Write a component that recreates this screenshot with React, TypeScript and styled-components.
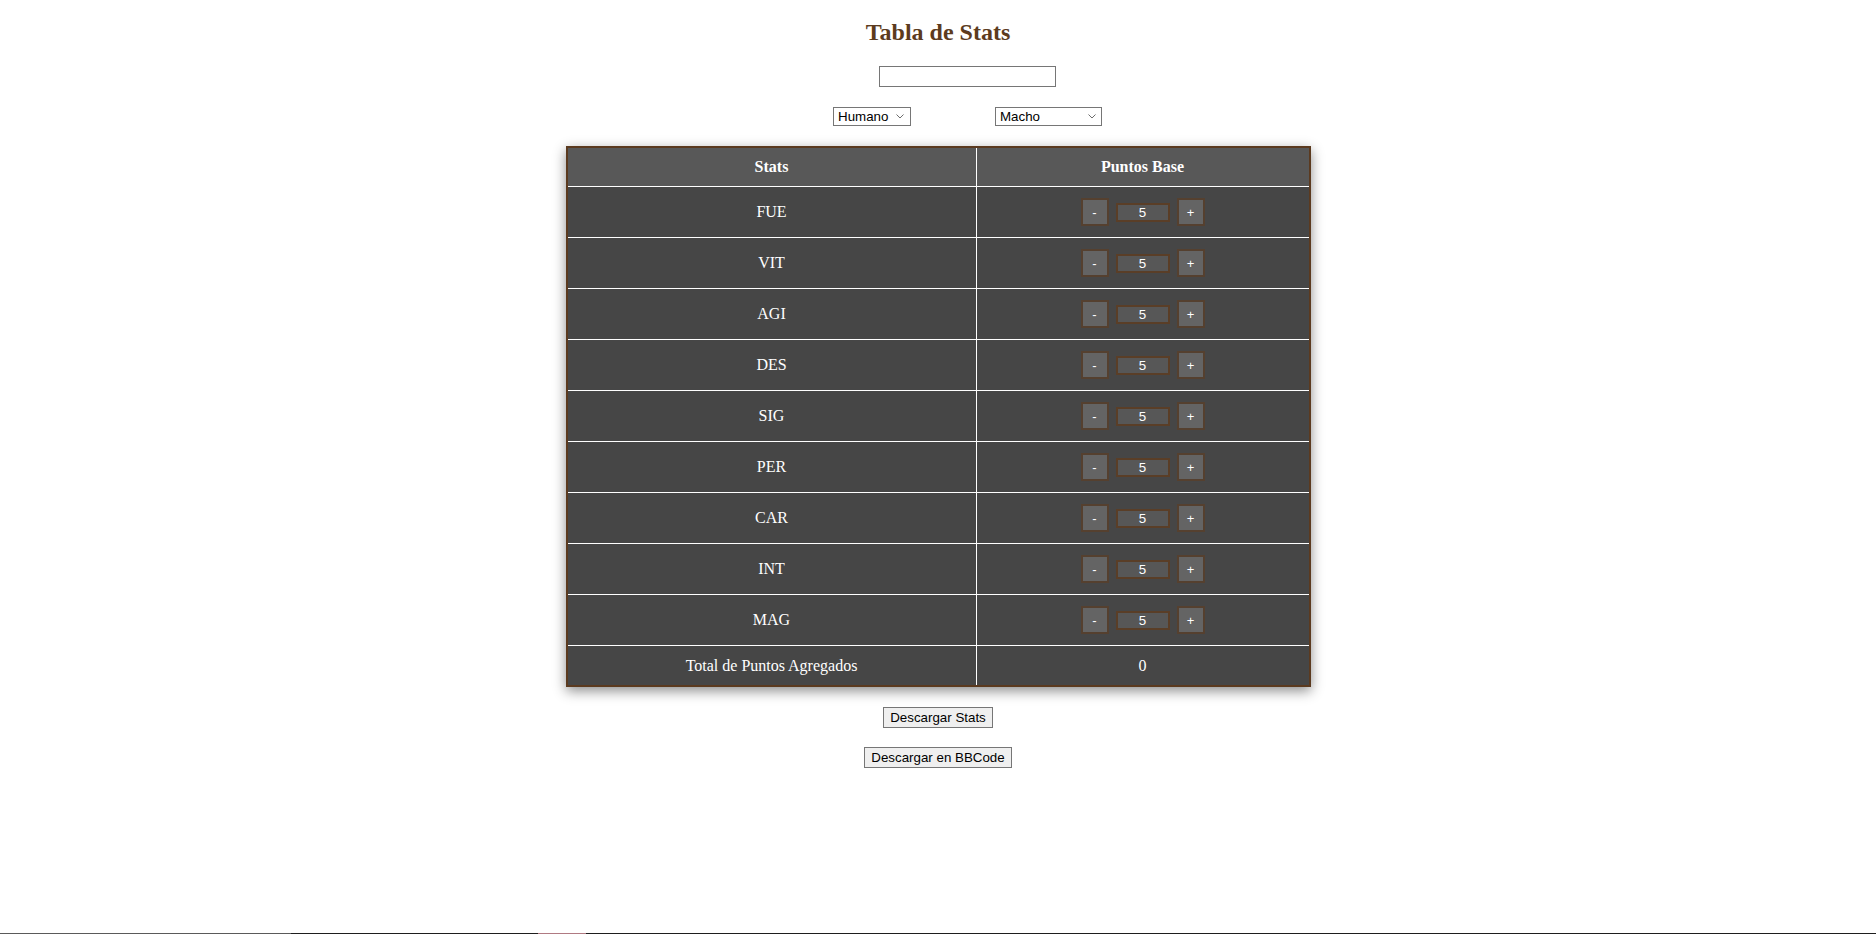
import React, { useState } from "react";
import styled, { createGlobalStyle } from "styled-components";

const GlobalStyle = createGlobalStyle`
  html, body {
    margin: 0;
    padding: 0;
    background: #ffffff;
  }
  body {
    font-family: "Liberation Serif", "Times New Roman", serif;
  }
`;

const Page = styled.main`
  display: flex;
  flex-direction: column;
  align-items: center;
  gap: 20px;
  padding-bottom: 40px;
`;

const Title = styled.h2`
  margin: 18px 0 0;
  font-family: "Liberation Serif", "Times New Roman", serif;
  font-size: 24px;
  line-height: 28px;
  font-weight: bold;
  color: #5c3b1e;
`;

const NameInput = styled.input`
  box-sizing: border-box;
  width: 177px;
  height: 21px;
  margin: 0 0 0 59px;
  padding: 1px 2px;
  border: 1px solid #767676;
  border-radius: 0;
  font-family: "Liberation Sans", Arial, sans-serif;
  font-size: 13.33px;
  outline: none;
`;

const SelectRow = styled.div`
  display: flex;
  gap: 84px;
  margin-left: 59px;
`;

const SelectWrap = styled.div`
  position: relative;
  display: flex;
`;

const Select = styled.select<{ $w: number }>`
  box-sizing: border-box;
  width: ${(p) => p.$w}px;
  height: 19px;
  margin: 0;
  padding: 0 0 0 4px;
  appearance: none;
  -webkit-appearance: none;
  border: 1px solid #767676;
  border-radius: 0;
  background: #ffffff;
  color: #000000;
  font-family: "Liberation Sans", Arial, sans-serif;
  font-size: 13.33px;
  line-height: 17px;
  outline: none;
`;

const Chevron = styled.svg<{ $right: number }>`
  position: absolute;
  top: 7px;
  right: ${(p) => p.$right}px;
  width: 8px;
  height: 5px;
  pointer-events: none;
`;

const Table = styled.table`
  box-sizing: border-box;
  width: 745px;
  table-layout: fixed;
  border-collapse: separate;
  border-spacing: 0;
  border: 2px solid #5b3a1f;
  box-shadow: 0 4px 12px rgba(0, 0, 0, 0.45);
  color: #ffffff;
  font-family: "Liberation Serif", "Times New Roman", serif;
  font-size: 16px;
`;

const HeadCell = styled.th<{ $first?: boolean }>`
  height: 39px;
  padding: 0;
  background: #585858;
  font-weight: bold;
  text-align: center;
  border-bottom: 1px solid #ffffff;
  border-right: ${(p) => (p.$first ? "1px solid #ffffff" : "none")};
  width: ${(p) => (p.$first ? "409px" : "auto")};
  box-sizing: border-box;
`;

const Cell = styled.td<{ $first?: boolean; $last?: boolean }>`
  height: ${(p) => (p.$last ? "39px" : "50px")};
  padding: 0;
  background: #464646;
  text-align: center;
  vertical-align: middle;
  border-bottom: ${(p) => (p.$last ? "none" : "1px solid #ffffff")};
  border-right: ${(p) => (p.$first ? "1px solid #ffffff" : "none")};
`;

const Controls = styled.div`
  display: flex;
  justify-content: center;
  align-items: center;
  gap: 7px;
`;

const StepButton = styled.button`
  box-sizing: border-box;
  width: 28px;
  height: 28px;
  padding: 0;
  margin: 0;
  background: #646464;
  border: 2px solid #55402f;
  border-radius: 0;
  color: #ffffff;
  font-family: "Liberation Sans", Arial, sans-serif;
  font-size: 13px;
  line-height: 1;
  cursor: pointer;
`;

const ValueInput = styled.input`
  box-sizing: border-box;
  width: 54px;
  height: 19px;
  margin: 0;
  padding: 0;
  background: #575757;
  border: 2px solid #5a3e27;
  border-radius: 0;
  color: #ffffff;
  text-align: center;
  font-family: "Liberation Sans", Arial, sans-serif;
  font-size: 13.33px;
  outline: none;
`;

const ActionButton = styled.button<{ $tight?: boolean }>`
  box-sizing: border-box;
  height: 21px;
  margin: ${(p) => (p.$tight ? "-1px 0 0" : "0")};
  padding: 1px 6px;
  background: #efefef;
  border: 1px solid #767676;
  border-radius: 0;
  color: #000000;
  font-family: "Liberation Sans", Arial, sans-serif;
  font-size: 13.33px;
  cursor: pointer;
`;

const BottomStrip = styled.div`
  position: fixed;
  left: 0;
  right: 0;
  bottom: 0;
  height: 1px;
  background: linear-gradient(
    to right,
    #5a5a5a 0,
    #5a5a5a 291px,
    #1e1e1e 291px,
    #1e1e1e 538px,
    #b07a82 538px,
    #b07a82 586px,
    #1e1e1e 586px,
    #1e1e1e 100%
  );
`;

const STATS = ["FUE", "VIT", "AGI", "DES", "SIG", "PER", "CAR", "INT", "MAG"];
const BASE = 5;

function ChevronIcon({ right }: { right: number }) {
  return (
    <Chevron $right={right} viewBox="0 0 8 5" aria-hidden="true">
      <polyline points="0.5,0.5 4,4 7.5,0.5" fill="none" stroke="#6d6d6d" strokeWidth="1" />
    </Chevron>
  );
}

export default function App() {
  const [values, setValues] = useState<number[]>(STATS.map(() => BASE));
  const total = values.reduce((s, v) => s + (v - BASE), 0);

  const change = (i: number, d: number) =>
    setValues((prev) => prev.map((v, j) => (j === i ? Math.max(0, v + d) : v)));

  return (
    <>
      <GlobalStyle />
      <Page>
        <Title>Tabla de Stats</Title>
        <NameInput type="text" />
        <SelectRow>
          <SelectWrap>
            <Select $w={78} defaultValue="Humano">
              <option>Humano</option>
              <option>Elfo</option>
              <option>Enano</option>
            </Select>
            <ChevronIcon right={7} />
          </SelectWrap>
          <SelectWrap>
            <Select $w={107} defaultValue="Macho">
              <option>Macho</option>
              <option>Hembra</option>
            </Select>
            <ChevronIcon right={6} />
          </SelectWrap>
        </SelectRow>
        <Table>
          <thead>
            <tr>
              <HeadCell $first>Stats</HeadCell>
              <HeadCell>Puntos Base</HeadCell>
            </tr>
          </thead>
          <tbody>
            {STATS.map((s, i) => (
              <tr key={s}>
                <Cell $first>{s}</Cell>
                <Cell>
                  <Controls>
                    <StepButton onClick={() => change(i, -1)}>-</StepButton>
                    <ValueInput type="text" value={values[i]} readOnly />
                    <StepButton onClick={() => change(i, 1)}>+</StepButton>
                  </Controls>
                </Cell>
              </tr>
            ))}
            <tr>
              <Cell $first $last>
                Total de Puntos Agregados
              </Cell>
              <Cell $last>{total}</Cell>
            </tr>
          </tbody>
        </Table>
        <ActionButton>Descargar Stats</ActionButton>
        <ActionButton $tight>Descargar en BBCode</ActionButton>
      </Page>
      <BottomStrip />
    </>
  );
}
